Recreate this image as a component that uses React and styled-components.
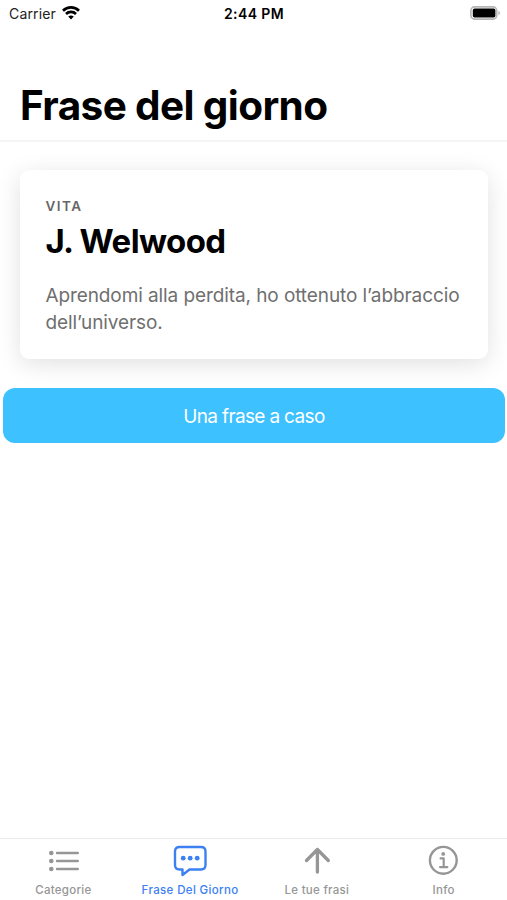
import React from "react";
import styled, { createGlobalStyle } from "styled-components";

const GlobalStyle = createGlobalStyle`
  * { box-sizing: border-box; }
  body {
    margin: 0;
    background: #fff;
    color: #000;
    font-family: Inter, "Liberation Sans", sans-serif;
  }
`;

const Screen = styled.div`
  display: flex;
  flex-direction: column;
  width: 100%;
  height: 100vh;
  overflow: hidden;
`;

const StatusBar = styled.div`
  display: grid;
  grid-template-columns: 1fr auto 1fr;
  align-items: center;
  height: 27px;
  padding: 0 6px 0 9px;
  font-size: 14px;
  line-height: 18px;
`;

const Carrier = styled.div`
  display: flex;
  align-items: center;
  gap: 6px;
  color: #222;
  letter-spacing: 0.15px;
  svg { display: block; margin-top: -1px; }
`;

const Clock = styled.div`
  font-weight: 600;
  letter-spacing: 0.4px;
  margin-left: -2px;
`;

const Battery = styled.svg`
  display: block;
  justify-self: end;
  margin-top: -1px;
`;

const Header = styled.header`
  display: flex;
  align-items: flex-end;
  height: 115px;
  padding: 0 20px 9px;
  border-bottom: 2px solid #f5f5f5;
`;

const Title = styled.h1`
  margin: 0;
  font-size: 40.5px;
  line-height: 50px;
  font-weight: 700;
  letter-spacing: -0.62px;
  white-space: nowrap;
`;

const Content = styled.main`
  flex: 1;
  display: flex;
  flex-direction: column;
  padding: 28px 2.5px 0 3.4px;
`;

const Card = styled.article`
  height: 189px;
  margin: 0 16.6px 0 17px;
  padding: 27px 25px 0;
  border-radius: 9px;
  background: #fff;
  box-shadow: 0 5px 24px rgba(0, 0, 0, 0.12);
`;

const Category = styled.div`
  color: #666;
  font-size: 13.5px;
  line-height: 18px;
  font-weight: 600;
  letter-spacing: 1.5px;
`;

const Author = styled.h2`
  margin: 5px 0 0;
  font-size: 33px;
  line-height: 42px;
  font-weight: 700;
  letter-spacing: -0.6px;
  white-space: nowrap;
`;

const Quote = styled.p`
  margin: 20px 0 0;
  color: #6f6f6f;
  font-size: 19px;
  line-height: 27px;
  letter-spacing: -0.09px;
  white-space: nowrap;
`;

const RandomButton = styled.button`
  height: 55px;
  margin: 29px 0 0;
  padding: 1px 0 0;
  border: 0;
  border-radius: 12px;
  background: #3ec1ff;
  color: #fff;
  font-family: inherit;
  font-size: 19px;
  line-height: 27px;
  letter-spacing: -0.65px;
`;

const TabBar = styled.nav`
  display: grid;
  grid-template-columns: repeat(4, 1fr);
  height: 62px;
  border-top: 1px solid #ececec;
`;

const Tab = styled.div`
  display: flex;
  flex-direction: column;
  align-items: center;
  padding-top: 4px;
  color: ${(p) => (p.$active ? "#3c80f2" : "#969696")};
  font-size: 11.5px;
  line-height: 16px;
  font-weight: 500;
  letter-spacing: ${(p) => (p.$active ? "0.36px" : "0.28px")};
  white-space: nowrap;
  svg { display: block; margin-bottom: 5px; }
`;

const TabIcon = ({ children }) => (
  <svg width="36" height="34" viewBox="0 0 36 34" fill="none" stroke="currentColor" strokeWidth="2.4" strokeLinecap="round" strokeLinejoin="round">
    {children}
  </svg>
);

const ListIcon = () => (
  <TabIcon>
    {[10, 18, 26].map((y) => (
      <g key={y}>
        <circle cx="6.3" cy={y} r="2.3" fill="currentColor" stroke="none" />
        <path d={`M12 ${y}H32.8`} />
      </g>
    ))}
  </TabIcon>
);

const BubbleIcon = () => (
  <TabIcon>
    <path d="M7.5 4H29Q33.5 4 33.5 8.5V22Q33.5 26.5 29 26.5H17.5L10.5 32V26.5H7.5Q3 26.5 3 22V8.5Q3 4 7.5 4Z" />
    {[11.2, 18.2, 25.2].map((x) => (
      <circle key={x} cx={x} cy="15.2" r="2.4" fill="currentColor" stroke="none" />
    ))}
  </TabIcon>
);

const ArrowIcon = () => (
  <TabIcon>
    <path d="M18.4 29V6.5M7.5 17.5L18.4 6.5L29.3 17.5" strokeWidth="3.3" />
  </TabIcon>
);

const InfoIcon = () => (
  <TabIcon>
    <circle cx="17.3" cy="17.3" r="13.4" />
    <circle cx="17.2" cy="10.9" r="1.9" fill="currentColor" stroke="none" />
    <path d="M14.6 15.4H17.7V24.2M14.1 24.2H21.3" strokeWidth="2.2" />
  </TabIcon>
);

const tabs = [
  { label: "Categorie", Icon: ListIcon },
  { label: "Frase Del Giorno", Icon: BubbleIcon, active: true },
  { label: "Le tue frasi", Icon: ArrowIcon },
  { label: "Info", Icon: InfoIcon },
];

export default function App() {
  return (
    <Screen>
      <GlobalStyle />
      <StatusBar>
        <Carrier>
          <span>Carrier</span>
          <svg width="18" height="14" viewBox="0 0 18 14" fill="none" stroke="#000" strokeWidth="2.7">
            <path d="M1 4.7C5.5 0.3 12.5 0.3 17 4.7" />
            <path d="M4 8C6.8 5.2 11.2 5.2 14 8" />
            <path d="M9 13.5L6.2 10.6Q9 8.3 11.8 10.6Z" fill="#000" stroke="none" />
          </svg>
        </Carrier>
        <Clock>2:44 PM</Clock>
        <Battery width="31" height="14" viewBox="0 0 31 14">
          <rect x="0.9" y="0.9" width="25.8" height="12.2" rx="3.6" fill="#fff" stroke="#b5b5b5" strokeWidth="1.6" />
          <rect x="2.8" y="2.6" width="22.6" height="9" rx="1.8" />
          <path d="M28.4 4.8Q31.6 7 28.4 9.2Z" fill="#b5b5b5" />
        </Battery>
      </StatusBar>
      <Header>
        <Title>Frase del giorno</Title>
      </Header>
      <Content>
        <Card>
          <Category>VITA</Category>
          <Author>J. Welwood</Author>
          <Quote>
            Aprendomi alla perdita, ho ottenuto l’abbraccio
            <br />
            dell’universo.
          </Quote>
        </Card>
        <RandomButton type="button">Una frase a caso</RandomButton>
      </Content>
      <TabBar>
        {tabs.map(({ label, Icon, active }) => (
          <Tab key={label} $active={active}>
            <Icon />
            <span>{label}</span>
          </Tab>
        ))}
      </TabBar>
    </Screen>
  );
}
